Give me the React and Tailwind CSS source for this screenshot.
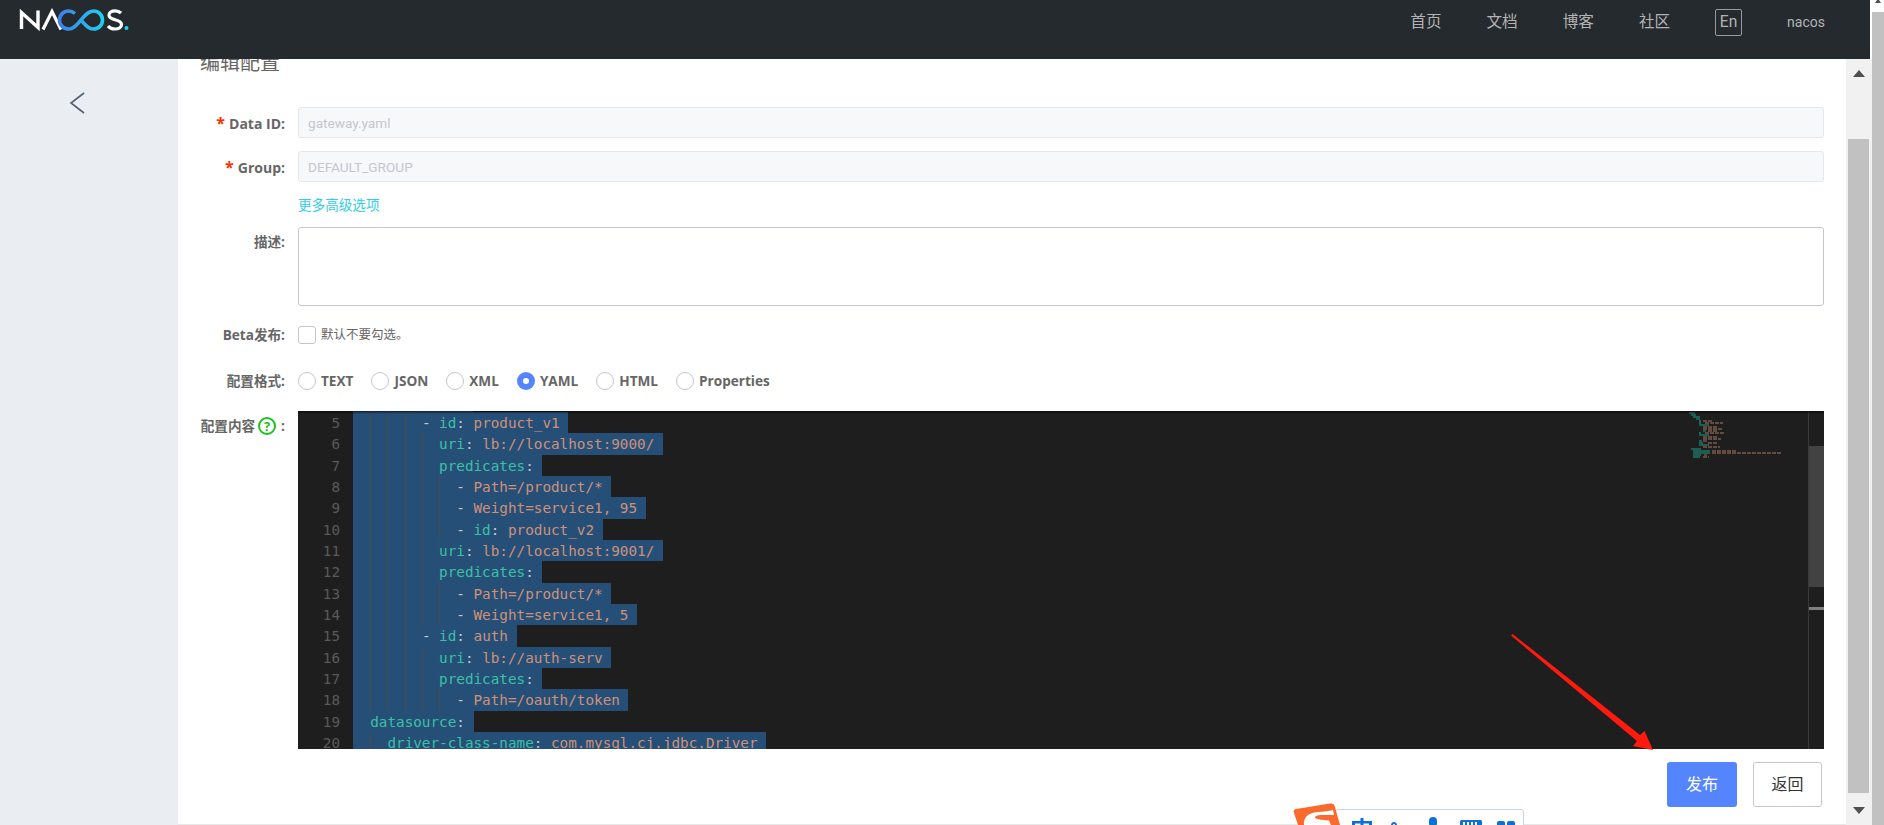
import React from "react";

const NAV = ["首页", "文档", "博客", "社区"];
const FORMATS = ["TEXT", "JSON", "XML", "YAML", "HTML", "Properties"];

// indent = leading spaces, guides = indent levels drawn as vertical lines
const LINES = [
  { no: 5, indent: 8, dash: true, key: "id", value: "product_v1", guides: [2, 4, 6] },
  { no: 6, indent: 10, key: "uri", value: "lb://localhost:9000/", guides: [2, 4, 6, 8] },
  { no: 7, indent: 10, key: "predicates", guides: [2, 4, 6, 8] },
  { no: 8, indent: 12, dash: true, value: "Path=/product/*", guides: [2, 4, 6, 8, 10] },
  { no: 9, indent: 12, dash: true, value: "Weight=service1, 95", guides: [2, 4, 6, 8, 10] },
  { no: 10, indent: 12, dash: true, key: "id", value: "product_v2", guides: [2, 4, 6, 8, 10] },
  { no: 11, indent: 10, key: "uri", value: "lb://localhost:9001/", guides: [2, 4, 6, 8] },
  { no: 12, indent: 10, key: "predicates", guides: [2, 4, 6, 8] },
  { no: 13, indent: 12, dash: true, value: "Path=/product/*", guides: [2, 4, 6, 8, 10] },
  { no: 14, indent: 12, dash: true, value: "Weight=service1, 5", guides: [2, 4, 6, 8, 10] },
  { no: 15, indent: 8, dash: true, key: "id", value: "auth", guides: [2, 4, 6] },
  { no: 16, indent: 10, key: "uri", value: "lb://auth-serv", guides: [2, 4, 6, 8] },
  { no: 17, indent: 10, key: "predicates", guides: [2, 4, 6, 8] },
  { no: 18, indent: 12, dash: true, value: "Path=/oauth/token", guides: [2, 4, 6, 8, 10] },
  { no: 19, indent: 2, key: "datasource", guides: [] },
  { no: 20, indent: 4, key: "driver-class-name", value: "com.mysql.cj.jdbc.Driver", guides: [2] },
];

// minimap rows: [y, [tealStart, tealEnd], [orangeStart, orangeEnd]]
const MINIMAP = [
  [0, [0, 6]],
  [2, [2, 7]],
  [4, [4, 11]],
  [6, [7, 11]],
  [8, [10, 12], [14, 24]],
  [10, [10, 12], [16, 34]],
  [12, [10, 20]],
  [14, null, [14, 28]],
  [16, null, [14, 33]],
  [18, [14, 17], [19, 29]],
  [20, [10, 12], [16, 35]],
  [22, [10, 20]],
  [24, null, [14, 28]],
  [26, null, [14, 32]],
  [28, [10, 13], [14, 18]],
  [30, [10, 14], [19, 29]],
  [32, [10, 20]],
  [34, null, [14, 31]],
  [36, [2, 12]],
  [38, [4, 21], [23, 47]],
  [40, [4, 21], [23, 93]],
  [42, [4, 12], [15, 18]],
  [44, [4, 11], [14, 20]],
];

const Logo = () => (
  <svg width="112" height="24" viewBox="0 0 112 24" fill="none" className="ml-[18px] mt-[8px]">
    <defs>
      <linearGradient id="inf" x1="42" y1="0" x2="85" y2="0" gradientUnits="userSpaceOnUse">
        <stop offset="0" stopColor="#3f7fe8" />
        <stop offset="1" stopColor="#1fd0ee" />
      </linearGradient>
    </defs>
    <path d="M3.500 21V4.500L20 19.500V2.500" stroke="#fff" strokeWidth="3.400" />
    <path d="M25 21.500L34 3.500L43 21.500" stroke="#fff" strokeWidth="3.200" />
    <path
      d="M57 5.500C55 3.800 52.500 3 50.500 3C45.500 3 41.500 7 41.500 12C41.500 17 45.500 21 50.500 21C56 21 59 16.500 63 12C67 7.500 70 3 75.500 3C80.500 3 84.500 7 84.500 12C84.500 17 80.500 21 75.500 21C70 21 67 16.500 63 12"
      stroke="url(#inf)"
      strokeWidth="3.600"
    />
    <path
      d="M103 5C101.500 3.500 99.500 2.800 97 2.800C93.500 2.800 91 4.500 91 7.200C91 13 103.500 10.500 103.500 16.500C103.500 19.500 100.500 21 97 21C94 21 91.500 20 90 18"
      stroke="#fff"
      strokeWidth="3.200"
    />
    <circle cx="108.500" cy="20" r="2" fill="#1fd0ee" />
  </svg>
);

const Label = ({ children, required }) => (
  <div className={`w-[85px] mr-[13px] shrink-0 text-right font-bold text-[#666] whitespace-nowrap font-['Open_Sans','Noto_Sans_CJK_SC',sans-serif] ${required ? "pt-[2px] text-[14px]" : "text-[13.6px]"}`}>
    {required && <span className="text-[#ff3000] text-[16px] leading-none mr-[4px]">*</span>}
    {children}
  </div>
);

const DisabledInput = ({ value }) => (
  <div className="flex-1 h-[31px] flex items-center px-[9px] pt-[2px] bg-[#f7f8fa] border border-[#e6e7eb] rounded-[3px] text-[13.6px] text-[#c4c6cf]">
    {value}
  </div>
);

const Radio = ({ label, checked }) => (
  <div className="flex items-center gap-[5px]">
    {checked ? (
      <span className="w-[18px] h-[18px] rounded-full bg-[#5584ff] flex items-center justify-center">
        <span className="w-[6px] h-[6px] rounded-full bg-white" />
      </span>
    ) : (
      <span className="w-[18px] h-[18px] rounded-full bg-white border border-[#c4c6cf]" />
    )}
    <span className="text-[13.6px] font-bold text-[#666] font-['Open_Sans',sans-serif]">{label}</span>
  </div>
);

const CodeLine = ({ line }) => (
  <div className="h-[21.33px]">
    <span className="relative inline-block h-full bg-[#264f78] whitespace-pre align-top leading-[22px]">
      {line.guides.map((g) => (
        <span key={g} className="absolute top-0 bottom-0 w-px bg-[#4a4a4a]" style={{ left: `${g}ch` }} />
      ))}
      <span>{" ".repeat(line.indent)}</span>
      {line.dash && <span className="text-[#c8c8c8]">- </span>}
      {line.key && <span className="text-[#3cc0a4]">{line.key}</span>}
      {line.key && <span className="text-[#c8c8c8]">:</span>}
      {line.key && line.value && " "}
      {line.value && <span className="text-[#ce9178]">{line.value}</span>}
      {" "}
    </span>
  </div>
);

const Minimap = () => (
  <svg width="100" height="48" viewBox="0 0 100 48" className="absolute left-[1391px] top-[1px]">
    {MINIMAP.map(([y, teal, orange]) => (
      <g key={y} strokeWidth="1.300">
        {teal && <line x1={teal[0]} x2={teal[1]} y1={y + 1} y2={y + 1} stroke="#1f9c85" opacity="0.8" />}
        {orange && <line x1={orange[0]} x2={orange[1]} y1={y + 1} y2={y + 1} stroke="#9a6f5c" strokeDasharray="4 1" opacity="0.75" />}
      </g>
    ))}
  </svg>
);

const Editor = () => (
  <div className="relative h-[338px] ml-[98px] bg-[#1e1e1e] overflow-hidden flex font-['DejaVu_Sans_Mono',monospace] text-[14.3px]">
    <div className="w-[55px] shrink-0 pt-px pr-[13px] text-right text-[#5a5a5a]">
      {LINES.map((l) => (
        <div key={l.no} className="h-[21.33px] leading-[22px]">{l.no}</div>
      ))}
    </div>
    <div className="flex-1 min-w-0">
      <div className="h-px w-[120px] bg-[#264f78]" />
      {LINES.map((l) => (
        <CodeLine key={l.no} line={l} />
      ))}
    </div>
    <Minimap />
    <div className="relative w-[16px] shrink-0 border-l border-[#3a3a3a]">
      <div className="mt-[35px] h-[141px] bg-[#424242]" />
      <div className="absolute left-0 right-0 top-[196px] h-[3px] bg-[#808080]" />
    </div>
    <div className="absolute inset-x-0 top-0 h-[3px] bg-gradient-to-b from-[#000000a0] to-transparent" />
  </div>
);

const ScrollTriangle = ({ down }) => (
  <svg width="12" height="7" viewBox="0 0 12 7" className="mx-auto">
    <path d={down ? "M0 0H12L6 7Z" : "M6 0L12 7H0Z"} fill="#505050" />
  </svg>
);

const SogouBar = () => (
  <>
    <div className="absolute left-[1335px] top-[809px] w-[189px] h-[22px] bg-white border border-[#c8d4e8] rounded-[3px]" />
    <svg width="235" height="24" viewBox="0 0 235 24" className="absolute left-[1291px] top-[801px]">
      <path d="M5 8C3 8.500 2 10 3 12L7 24H49L44 6C43.500 3 41.500 2 39 2.500Z" fill="#fb6a2d" />
      <path d="M13 24C12 17 17 11.500 27 11C33 10.700 38 10 42 9L43 14C35 14.500 26 13 24 16C23 18 30 19 38 19.500L40 24Z" fill="#fff" />
      <g fill="#0d6fd8">
        <path d="M61 20H69.500V17H72.500V20H81V24H78V22.500H72.500V24H69.500V22.500H64V24H61Z" />
        <path d="M100 24C100 22 101.500 21 103 21C104.500 21 106 22 106 24H104C104 23.200 103.500 23 103 23C102.500 23 102 23.200 102 24Z" />
        <rect x="138" y="16" width="8" height="10" rx="4" />
        <path d="M169 20.500C169 19.500 170 19 171 19H189C190 19 191 19.500 191 20.500V24H169Z" />
        <rect x="206" y="20" width="8" height="6" rx="2" />
        <rect x="216" y="20" width="8" height="6" rx="2" />
      </g>
      <g fill="#fff">
        <rect x="172" y="21" width="2" height="3" />
        <rect x="176" y="21" width="2" height="3" />
        <rect x="180" y="21" width="2" height="3" />
        <rect x="184" y="21" width="2" height="3" />
      </g>
    </svg>
  </>
);

const RedArrow = () => (
  <svg width="150" height="125" viewBox="0 0 150 125" className="absolute left-[1508px] top-[630px]">
    <path d="M3 5.500L4.500 4L132 105L136.500 101L145 120L125 116L129 111Z" fill="#ff1a0f" />
  </svg>
);

export default function App() {
  return (
    <div className="relative w-[1884px] h-[825px] overflow-hidden flex bg-white font-[Roboto,'Noto_Sans_CJK_SC',sans-serif]">
      <div className="flex-1 min-w-0 flex flex-col">
        <header className="h-[59px] shrink-0 bg-[#252a2f] flex items-start justify-between">
          <Logo />
          <div className="h-[46px] pr-[45px] flex items-center gap-[45px] text-[#b3b3b3]">
            {NAV.map((n) => (
              <span key={n} className="text-[15.6px]">{n}</span>
            ))}
            <span className="w-[27px] h-[27px] -mt-px flex items-center justify-center border border-[#9a9a9a] rounded-[2px] text-[15.6px]">
              En
            </span>
            <span className="text-[14px] -mt-px">nacos</span>
          </div>
        </header>

        <div className="flex-1 min-h-0 flex">
          <aside className="w-[178px] shrink-0 bg-[#eaedf1] pt-[33px] pl-[69px]">
            <svg width="16" height="22" viewBox="0 0 16 22" fill="none">
              <path d="M15 1L2 11L15 21" stroke="#4f6275" strokeWidth="1.600" />
            </svg>
          </aside>

          <main className="flex-1 min-w-0 overflow-hidden px-[22px] border-b border-[#e8e8e8]">
            <div className="-mt-[10px] h-[28px] leading-[28px] mb-[30px] text-[20px] text-[#666]">编辑配置</div>

            <div className="flex items-center">
              <Label required>Data ID:</Label>
              <DisabledInput value="gateway.yaml" />
            </div>
            <div className="flex items-center mt-[13px]">
              <Label required>Group:</Label>
              <DisabledInput value="DEFAULT_GROUP" />
            </div>
            <div className="ml-[98px] mt-[13px] h-[20px] leading-[20px] text-[13.6px] text-[#33cde5]">更多高级选项</div>

            <div className="flex items-start mt-[12px]">
              <div className="pt-[5px]">
                <Label>描述:</Label>
              </div>
              <div className="flex-1 h-[79px] bg-white border border-[#c4c6cf] rounded-[3px]" />
            </div>

            <div className="flex items-center mt-[20px] h-[18px]">
              <Label>Beta发布:</Label>
              <span className="w-[18px] h-[18px] bg-white border border-[#c4c6cf] rounded-[3px] mr-[5px]" />
              <span className="text-[12.5px] text-[#666]">默认不要勾选。</span>
            </div>

            <div className="flex items-center mt-[28px] h-[18px]">
              <Label>配置格式:</Label>
              <div className="flex items-center gap-[18px]">
                {FORMATS.map((f) => (
                  <Radio key={f} label={f} checked={f === "YAML"} />
                ))}
              </div>
            </div>

            <div className="relative mt-[21px]">
              <div className="absolute left-0 top-[5px] w-[85px] flex items-center justify-end text-[13.6px] font-bold text-[#666] whitespace-nowrap font-['Open_Sans','Noto_Sans_CJK_SC',sans-serif]">
                配置内容
                <span className="ml-[3px] mr-[5px] w-[18px] h-[18px] shrink-0 flex items-center justify-center rounded-full border-2 border-[#1dc11d] text-[#1dc11d] text-[13px] leading-none">
                  ?
                </span>
                :
              </div>
              <Editor />
            </div>

            <div className="flex justify-end gap-[16px] mt-[13px] pr-[2px]">
              <button className="w-[70px] h-[45px] rounded-[3px] bg-[#5584ff] text-white text-[16px]">发布</button>
              <button className="w-[69px] h-[45px] rounded-[3px] bg-white border border-[#c4c6cf] text-[#333] text-[16px]">返回</button>
            </div>
          </main>

          <div className="w-[24px] shrink-0 bg-[#f1f1f1] flex flex-col pl-[2px] pr-px">
            <div className="h-[80px] pt-[11px]">
              <ScrollTriangle />
            </div>
            <div className="h-[654px] bg-[#c1c1c1]" />
            <div className="pt-[14px]">
              <ScrollTriangle down />
            </div>
          </div>
        </div>
      </div>

      <div className="w-[14px] shrink-0 flex">
        <div className="w-[2px] flex flex-col">
          <div className="h-[59px] bg-white" />
          <div className="flex-1 bg-[#f1f1f1]" />
        </div>
        <div className="flex-1 flex flex-col">
          <div className="h-[12px] bg-white">
            <svg width="12" height="3" viewBox="0 0 12 3">
              <path d="M3 3L5 0H7L9 3Z" fill="#505050" />
            </svg>
          </div>
          <div className="flex-1 bg-[#c1c1c1]" />
        </div>
      </div>

      <RedArrow />
      <SogouBar />
    </div>
  );
}
